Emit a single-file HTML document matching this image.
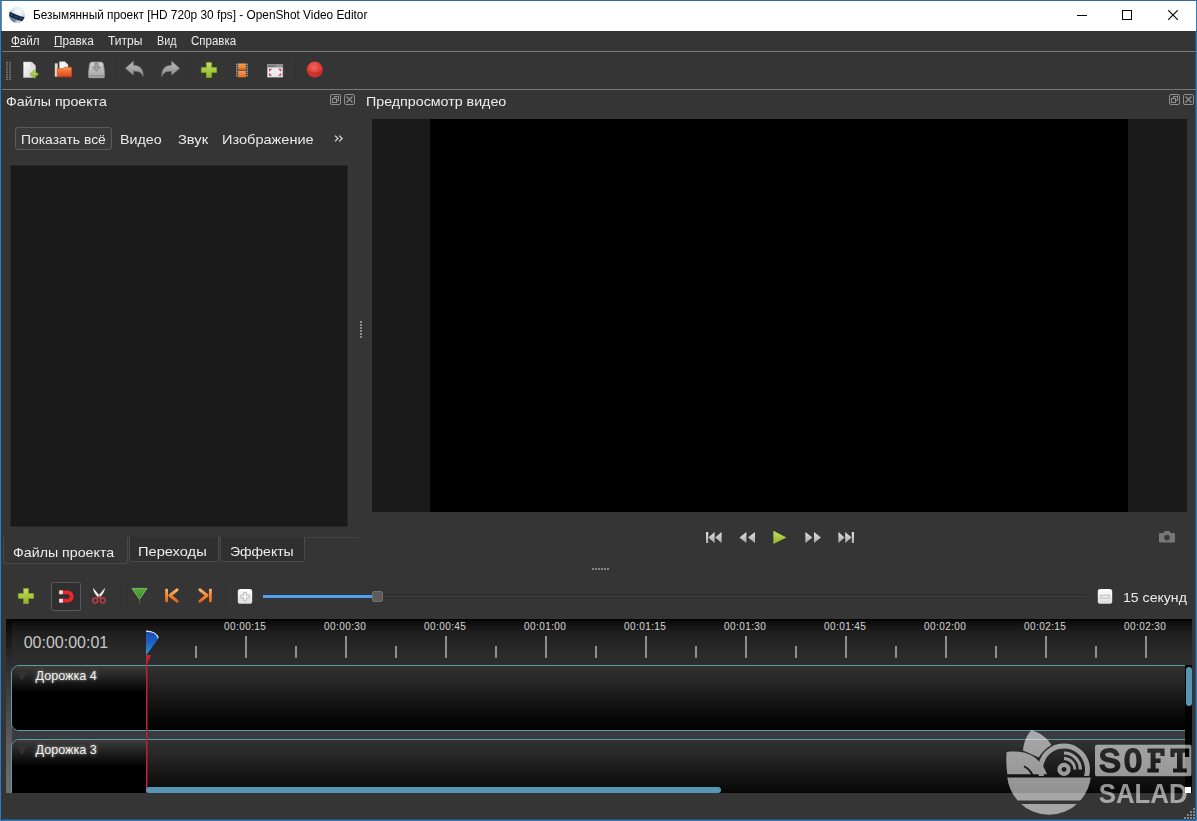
<!DOCTYPE html>
<html lang="ru">
<head>
<meta charset="utf-8">
<title>OpenShot Video Editor</title>
<style>
*{box-sizing:border-box;margin:0;padding:0}
html,body{width:1197px;height:821px;overflow:hidden}
body{font-family:"Liberation Sans",sans-serif;background:#353535;color:#e4e4e4;position:relative;font-size:13px}
.abs{position:absolute}
.t{position:absolute;white-space:nowrap;line-height:1}
#win{position:absolute;left:0;top:0;width:1197px;height:821px;border:1px solid #2b7cc0;border-top-color:#2a6f9e;border-left-color:#3f78a8;z-index:30;pointer-events:none}
#win:after{content:"";position:absolute;right:0;top:30px;width:1px;height:789px;background:rgba(43,124,192,.35)}
#win:before{content:"";position:absolute;left:0;bottom:0;width:1195px;height:1px;background:rgba(43,124,192,.4)}
#lb{position:absolute;left:1px;top:1px;width:1px;height:819px;background:rgba(22,62,100,.6);z-index:30}
#titlebar{position:absolute;left:1px;top:1px;width:1195px;height:30px;background:#fff}
#title{left:33px;top:9px;font-size:12px;color:#000}
#menubar{position:absolute;left:1px;top:31px;width:1195px;height:21px;background:#353535}
.menu{font-size:12.5px;color:#e6e6e6;top:35px}
.hline{position:absolute;left:2px;width:1194px;height:1px;background:#787878}
.docktitle{font-size:14px;color:#e8e8e8}
.flt{font-size:14.5px;color:#e2e2e2;top:133px}
#filelist{position:absolute;left:10px;top:165px;width:338px;height:362px;background:#1a1a1a;border:1px solid #282828}
.tab{position:absolute;top:537px;height:25px;border:1px solid #4a4a4a;border-top:none;border-radius:0 0 3px 3px;background:#2f2f2f;font-size:14.5px;color:#e6e6e6}
#preview{position:absolute;left:372px;top:119px;width:815px;height:393px;background:#1a1a1a}
#video{position:absolute;left:430px;top:119px;width:698px;height:393px;background:#000}
#timeline{position:absolute;left:6px;top:619px;width:1186px;height:174px;background:linear-gradient(#000 0px,#2c2c2c 41px,#333335 80px,#3b3a3e 115px,#3f3f41 174px);overflow:hidden}
#ruler{position:absolute;left:0;top:0;width:1186px;height:42px;background:linear-gradient(#000 0%,#0e0e0e 7%,#1e1e1e 32%,#262626 62%,#2e2e2e 100%)}
#lstrip{position:absolute;left:0;top:0;width:6px;height:174px;background:linear-gradient(#050505 0px,#2c2c2c 41px,#4a4a4a 95px,#5e5e5e 125px,#6e6e6e 174px)}
.rl{position:absolute;top:3.4px;font-size:10px;letter-spacing:.42px;color:#d8d8d8;width:62px;text-align:center;line-height:10px;margin-left:-.8px}
.tk{position:absolute;width:2px;background:#8f8f8f}
.track{position:absolute;left:5px;width:1181px;height:66px;border:1px solid #5c9da6;border-radius:8px 0 0 8px;background:linear-gradient(#323232 0%,#262626 25%,#151515 55%,#030303 92%,#000 100%);overflow:hidden}
.tlabel{position:absolute;left:0;top:0;width:134px;height:100%;background:linear-gradient(#3c3c3c 0%,#1c1c1c 22%,#000 42%)}
.tarrow{position:absolute;left:5px;top:6px}
.tname{position:absolute;left:23.5px;top:3px;font-size:12.6px;color:#f2f2f2;line-height:14px;text-shadow:0 0 3px rgba(255,255,255,.5),0 0 6px rgba(255,255,255,.25)}
</style>
</head>
<body>
<div id="win"></div><div id="lb"></div>
<div id="titlebar"></div>
<div id="menubar"></div>
<div class="hline" style="top:51px"></div>
<div class="hline" style="top:89px"></div>


<!-- main toolbar -->
<svg class="abs" style="left:6px;top:62px" width="6" height="18" viewBox="0 0 6 18">
  <g fill="#6f6f6f"><rect x="0" y="0" width="2" height="1.5"/><rect x="3" y="0" width="2" height="1.5"/>
  <rect x="0" y="2.4" width="2" height="1.5"/><rect x="3" y="2.4" width="2" height="1.5"/>
  <rect x="0" y="4.8" width="2" height="1.5"/><rect x="3" y="4.8" width="2" height="1.5"/>
  <rect x="0" y="7.2" width="2" height="1.5"/><rect x="3" y="7.2" width="2" height="1.5"/>
  <rect x="0" y="9.6" width="2" height="1.5"/><rect x="3" y="9.6" width="2" height="1.5"/>
  <rect x="0" y="12" width="2" height="1.5"/><rect x="3" y="12" width="2" height="1.5"/>
  <rect x="0" y="14.4" width="2" height="1.5"/><rect x="3" y="14.4" width="2" height="1.5"/>
  <rect x="0" y="16.5" width="2" height="1.5"/><rect x="3" y="16.5" width="2" height="1.5"/></g>
</svg>
<!-- new -->
<svg class="abs" style="left:22px;top:61px" width="18" height="18" viewBox="0 0 18 18">
  <defs><linearGradient id="gDoc" x1="0" y1="0" x2="1" y2="1"><stop offset="0" stop-color="#fdfdfd"/><stop offset="1" stop-color="#cfcfcf"/></linearGradient>
  <linearGradient id="gGrn" x1="0" y1="0" x2="0" y2="1"><stop offset="0" stop-color="#c8e06a"/><stop offset="1" stop-color="#8db52c"/></linearGradient></defs>
  <path d="M1.5 1 H9.5 L13.5 5 V16.5 H1.5 Z" fill="url(#gDoc)" stroke="#bdbdbd" stroke-width=".6"/>
  <path d="M9.5 1 V5 H13.5 Z" fill="#e9e9e9" stroke="#bdbdbd" stroke-width=".5"/>
  <path d="M11 9.6 h2.6 v2.3 h2.3 v2.6 h-2.3 v2.3 h-2.6 v-2.3 h-2.3 v-2.6 h2.3 Z" fill="url(#gGrn)" stroke="#7c9f25" stroke-width=".6"/>
</svg>
<!-- open -->
<svg class="abs" style="left:54px;top:61px" width="19" height="18" viewBox="0 0 19 18">
  <defs><linearGradient id="gFold" x1="0" y1="0" x2="0" y2="1"><stop offset="0" stop-color="#f49a5a"/><stop offset=".5" stop-color="#ee6a2c"/><stop offset="1" stop-color="#e0451c"/></linearGradient></defs>
  <path d="M1 2.5 H3.5 V15.5 H1 Z" fill="#e8e0d8" stroke="#c9b9a9" stroke-width=".5"/>
  <path d="M5.5 .8 H11 L14 3.8 V9 H5.5 Z" fill="#f6f6f6" stroke="#cfcfcf" stroke-width=".5"/>
  <path d="M11 .8 V3.8 H14 Z" fill="#dcdcdc"/>
  <path d="M3.2 7.6 H9 L10.3 6.2 H17.6 V15.8 H3.2 Z" fill="url(#gFold)" stroke="#d0451e" stroke-width=".6"/>
</svg>
<!-- save -->
<svg class="abs" style="left:87px;top:61px" width="19" height="18" viewBox="0 0 19 18">
  <defs><linearGradient id="gSav" x1="0" y1="0" x2="0" y2="1"><stop offset="0" stop-color="#cfcfcf"/><stop offset="1" stop-color="#a6a6a6"/></linearGradient></defs>
  <path d="M5 1 H14 Q16 1 16.4 3 L17.6 11.4 V15.4 Q17.6 16.9 16 16.9 H3 Q1.4 16.9 1.4 15.4 V11.4 L2.6 3 Q3 1 5 1Z" fill="url(#gSav)" stroke="#909090" stroke-width=".6"/>
  <path d="M8 2 H11 V6.2 H13.4 L9.5 10.4 L5.6 6.2 H8 Z" fill="#a2a2a2" stroke="#7e7e7e" stroke-width=".8" stroke-linejoin="round"/>
  <rect x="2.6" y="14.2" width="13.8" height="1.1" fill="#8a8a8a"/>
</svg>
<div class="abs" style="left:116px;top:58px;width:1px;height:25px;background:#303030"></div>
<!-- undo -->
<svg class="abs" style="left:124px;top:60px" width="21" height="18" viewBox="0 0 21 18">
  <defs><linearGradient id="gUn" x1="0" y1="0" x2="0" y2="1"><stop offset="0" stop-color="#bdbdbd"/><stop offset="1" stop-color="#8a8a8a"/></linearGradient></defs>
  <path d="M9.4 1.2 V5.2 C15.4 5.2 19.6 8.6 19.2 16.4 C17.6 12.6 14.6 10.8 9.4 11.2 V15.2 L1.4 8.2 Z" fill="url(#gUn)" stroke="#7e7e7e" stroke-width=".5"/>
</svg>
<!-- redo -->
<svg class="abs" style="left:160px;top:60px" width="21" height="18" viewBox="0 0 21 18">
  <path transform="translate(21,0) scale(-1,1)" d="M9.4 1.2 V5.2 C15.4 5.2 19.6 8.6 19.2 16.4 C17.6 12.6 14.6 10.8 9.4 11.2 V15.2 L1.4 8.2 Z" fill="url(#gUn)" stroke="#7e7e7e" stroke-width=".5"/>
</svg>
<div class="abs" style="left:189px;top:58px;width:1px;height:25px;background:#303030"></div>
<!-- plus -->
<svg class="abs" style="left:200px;top:61px" width="18" height="18" viewBox="0 0 18 18">
  <defs><linearGradient id="gPl" x1="0" y1="0" x2="0" y2="1"><stop offset="0" stop-color="#c6df6c"/><stop offset=".5" stop-color="#a9cc3f"/><stop offset="1" stop-color="#8fb52c"/></linearGradient></defs>
  <path d="M6.4 1.4 H11.6 V6.4 H16.6 V11.6 H11.6 V16.6 H6.4 V11.6 H1.4 V6.4 H6.4 Z" fill="url(#gPl)" stroke="#86a82a" stroke-width=".7" stroke-linejoin="round"/>
</svg>
<!-- film -->
<svg class="abs" style="left:235px;top:61.5px" width="14" height="17" viewBox="0 0 16 18" preserveAspectRatio="none">
  <defs><linearGradient id="gFi" x1="0" y1="0" x2="0" y2="1"><stop offset="0" stop-color="#f5a25a"/><stop offset="1" stop-color="#ec6b1e"/></linearGradient></defs>
  <rect x="1.3" y="1.2" width="13.4" height="15.4" fill="#3a3a3a"/>
  <rect x="3.6" y="1.6" width="8.8" height="6.6" fill="url(#gFi)"/>
  <rect x="3.6" y="9.2" width="8.8" height="7" fill="url(#gFi)"/>
  <g fill="#f2f2f2"><rect x="1.6" y="1.8" width="1.1" height="1.3"/><rect x="1.6" y="4.2" width="1.1" height="1.3"/><rect x="1.6" y="6.6" width="1.1" height="1.3"/><rect x="1.6" y="9" width="1.1" height="1.3"/><rect x="1.6" y="11.4" width="1.1" height="1.3"/><rect x="1.6" y="13.8" width="1.1" height="1.3"/>
  <rect x="13.3" y="1.8" width="1.1" height="1.3"/><rect x="13.3" y="4.2" width="1.1" height="1.3"/><rect x="13.3" y="6.6" width="1.1" height="1.3"/><rect x="13.3" y="9" width="1.1" height="1.3"/><rect x="13.3" y="11.4" width="1.1" height="1.3"/><rect x="13.3" y="13.8" width="1.1" height="1.3"/></g>
</svg>
<!-- fullscreen -->
<svg class="abs" style="left:266px;top:62.6px" width="18" height="15.6" viewBox="0 0 18 17" preserveAspectRatio="none">
  <rect x="1.4" y="1.6" width="15.4" height="13.8" fill="#ececec" stroke="#b5b5b5" stroke-width=".6"/>
  <rect x="1.4" y="1.6" width="15.4" height="3.2" fill="#7a7a7a"/>
  <g fill="#cfcfcf"><rect x="10.2" y="2.7" width="1.3" height="1"/><rect x="12.2" y="2.7" width="1.3" height="1"/><rect x="14.2" y="2.7" width="1.3" height="1"/></g>
  <g fill="#d8374a"><path d="M3 6.4 h3.2 l-3.2 3.2Z"/><path d="M15.2 6.4 h-3.2 l3.2 3.2Z"/><path d="M3 14 h3.2 l-3.2 -3.2Z"/><path d="M15.2 14 h-3.2 l3.2 -3.2Z"/></g>
</svg>
<div class="abs" style="left:295px;top:58px;width:1px;height:25px;background:#303030"></div>
<!-- record -->
<svg class="abs" style="left:306px;top:61px" width="18" height="18" viewBox="0 0 18 18">
  <defs><radialGradient id="gRec" cx=".45" cy=".35" r=".7"><stop offset="0" stop-color="#f0655c"/><stop offset=".6" stop-color="#e03a34"/><stop offset="1" stop-color="#c22826"/></radialGradient></defs>
  <circle cx="8.8" cy="8.6" r="8" fill="url(#gRec)"/><path d="M1.2 9.4 Q8.8 12.4 16.4 9.4 Q16 11.6 14.8 13 Q8.8 15 2.8 13 Q1.6 11.6 1.2 9.4Z" fill="#b82222" opacity=".35"/>
</svg>


<div class="abs" style="left:15px;top:127px;width:97px;height:23px;border:1px solid #5a5a5a;border-radius:3px;background:#3a3a3a"></div>
<svg class="abs" style="left:334px;top:135px" width="10" height="7" viewBox="0 0 10 7"><path d="M1 .6 L4 3.5 L1 6.4 M5.2 .6 L8.2 3.5 L5.2 6.4" fill="none" stroke="#dcdcdc" stroke-width="1.2"/></svg>

<div id="filelist"></div>

<div class="abs" style="left:3px;top:537px;width:355px;height:1px;background:#444"></div>
<div class="tab" style="left:3px;width:125px;background:#353535;border-top:1px solid #353535;top:537px;height:27px"></div>
<div class="tab" style="left:129px;width:90px"></div>
<div class="tab" style="left:220px;width:85px"></div>

<div id="preview"></div>
<div id="video"></div>


<!-- title icon -->
<svg class="abs" style="left:8px;top:6px" width="18" height="18" viewBox="0 0 18 18">
  <defs><radialGradient id="gSph" cx=".6" cy=".28" r=".8"><stop offset="0" stop-color="#ffffff"/><stop offset=".45" stop-color="#d4e4ee"/><stop offset="1" stop-color="#7f97ac"/></radialGradient>
  <clipPath id="cSph"><circle cx="9" cy="9" r="7.9"/></clipPath></defs>
  <circle cx="9" cy="9" r="7.9" fill="url(#gSph)"/>
  <g clip-path="url(#cSph)">
    <path d="M0 4.6 C5 7.4 11 10 18 11.4 L18 15.8 C11 14.8 5 12.6 0 9.6 Z" fill="#15233c"/>
    <path d="M0 9.6 C5 12.6 11 14.8 18 15.8 L18 18 L0 18Z" fill="#5b7390" opacity=".8"/>
    <path d="M2 7.2 L5 8.6 L4.6 10.2 L1.6 8.8Z M6.4 9.4 L9.6 10.6 L9.2 12.2 L6 11Z M11 11.2 L14.4 12 L14 13.6 L10.6 12.8Z" fill="#2d4a78" opacity=".9"/>
    <ellipse cx="10" cy="16" rx="3" ry="1.6" fill="#e6eef4" opacity=".8"/>
  </g>
</svg>
<!-- window controls -->
<div class="abs" style="left:1077px;top:15px;width:10px;height:1px;background:#000"></div>
<div class="abs" style="left:1122px;top:10px;width:10px;height:10px;border:1px solid #000"></div>
<svg class="abs" style="left:1168px;top:10px" width="10" height="10" viewBox="0 0 10 10"><path d="M0 0 L10 10 M10 0 L0 10" stroke="#000" stroke-width="1.1"/></svg>

<!-- dock buttons -->
<svg class="abs dockbtn" style="left:330px;top:94px" width="26" height="11" viewBox="0 0 26 11">
  <g fill="none" stroke="#8e8e8e" stroke-width="1"><rect x=".5" y=".5" width="10" height="10" rx="1.5"/><rect x="4.5" y="2.5" width="4" height="4"/><rect x="2.5" y="4.5" width="4" height="4" fill="#353535"/>
  <rect x="14.5" y=".5" width="10" height="10" rx="1.5"/><path d="M16.5 2.5 L22.5 8.5 M22.5 2.5 L16.5 8.5" stroke-width="1.3"/></g>
</svg>
<svg class="abs dockbtn" style="left:1169px;top:94px" width="26" height="11" viewBox="0 0 26 11">
  <g fill="none" stroke="#8e8e8e" stroke-width="1"><rect x=".5" y=".5" width="10" height="10" rx="1.5"/><rect x="4.5" y="2.5" width="4" height="4"/><rect x="2.5" y="4.5" width="4" height="4" fill="#353535"/>
  <rect x="14.5" y=".5" width="10" height="10" rx="1.5"/><path d="M16.5 2.5 L22.5 8.5 M22.5 2.5 L16.5 8.5" stroke-width="1.3"/></g>
</svg>

<!-- splitter handles -->
<svg class="abs" style="left:360px;top:321px" width="2" height="17" viewBox="0 0 2 17"><g fill="#8c8c8c"><rect x="0" y="0" width="2" height="2"/><rect x="0" y="3" width="2" height="2"/><rect x="0" y="6" width="2" height="2"/><rect x="0" y="9" width="2" height="2"/><rect x="0" y="12" width="2" height="2"/><rect x="0" y="15" width="2" height="2"/></g></svg>
<svg class="abs" style="left:592px;top:568px" width="17" height="2" viewBox="0 0 17 2"><g fill="#848484"><rect y="0" x="0" width="2" height="2"/><rect y="0" x="3" width="2" height="2"/><rect y="0" x="6" width="2" height="2"/><rect y="0" x="9" width="2" height="2"/><rect y="0" x="12" width="2" height="2"/><rect y="0" x="15" width="2" height="2"/></g></svg>

<!-- playback controls -->
<svg class="abs" style="left:705px;top:530px" width="150" height="15" viewBox="0 0 150 15">
  <defs><linearGradient id="gPb" x1="0" y1="0" x2="0" y2="1"><stop offset="0" stop-color="#e2e2e2"/><stop offset="1" stop-color="#a8a8a8"/></linearGradient>
  <linearGradient id="gPlay" x1="0" y1="0" x2="0" y2="1"><stop offset="0" stop-color="#c3e05e"/><stop offset="1" stop-color="#8fb62c"/></linearGradient></defs>
  <g fill="url(#gPb)">
    <rect x="1" y="2" width="2.2" height="11"/><path d="M9.6 2 V13 L3.4 7.5Z"/><path d="M16.6 2 V13 L10.2 7.5Z"/>
    <path d="M41.4 2 V13 L34.4 7.5Z"/><path d="M50 2 V13 L43 7.5Z"/>
    <path d="M100.4 2 V13 L107.4 7.5Z"/><path d="M109 2 V13 L116 7.5Z"/>
    <path d="M133.4 2 V13 L139.6 7.5Z"/><path d="M140.2 2 V13 L146.6 7.5Z"/><rect x="146.8" y="2" width="2.2" height="11"/>
  </g>
  <path d="M68.4 .8 V14 L81.4 7.4Z" fill="url(#gPlay)"/>
</svg>
<!-- camera -->
<svg class="abs" style="left:1158px;top:529px" width="18" height="15" viewBox="0 0 18 15">
  <path d="M2 4 H5.4 L6.6 2 H11.4 L12.6 4 H16 Q17 4 17 5 V12.6 Q17 13.6 16 13.6 H2 Q1 13.6 1 12.6 V5 Q1 4 2 4Z" fill="#787878"/>
  <circle cx="9" cy="8.6" r="2.8" fill="#3a3a3a"/>
</svg>


<!-- timeline toolbar -->
<svg class="abs" style="left:17px;top:587px" width="18" height="18" viewBox="0 0 18 18">
  <path d="M6.6 1.4 H11.4 V6.6 H16.6 V11.4 H11.4 V16.6 H6.6 V11.4 H1.4 V6.6 H6.6 Z" fill="url(#gPl)" stroke="#86a82a" stroke-width=".7" stroke-linejoin="round"/>
</svg>
<div class="abs" style="left:51px;top:582px;width:30px;height:29px;border:1px solid #585858;border-radius:2px;background:#2f2f2f"></div>
<svg class="abs" style="left:58px;top:589px" width="18" height="15" viewBox="0 0 18 15">
  <path d="M1.2 1.4 H9.6 A6.1 6.1 0 0 1 9.6 13.6 H1.2 V9.8 H9.4 A2.3 2.3 0 0 0 9.4 5.2 H1.2 Z" fill="#e8262c"/>
  <rect x="1.2" y="1.4" width="3.6" height="3.8" fill="#f5e4e4"/><rect x="1.2" y="9.8" width="3.6" height="3.8" fill="#f5e4e4"/>
</svg>
<svg class="abs" style="left:91px;top:587px" width="16" height="18" viewBox="0 0 16 18">
  <path d="M2 .8 C2.2 5 5 8.6 8 11 L9.4 9.6 C7.2 6.8 4.4 3.6 2 .8Z" fill="#f0f0f0"/>
  <path d="M14 .8 C13.8 5 11 8.6 8 11 L6.6 9.6 C8.8 6.8 11.6 3.6 14 .8Z" fill="#e6e6e6"/>
  <circle cx="4.2" cy="13.6" r="2.5" fill="none" stroke="#c03a44" stroke-width="1.5"/>
  <circle cx="11.8" cy="13.6" r="2.5" fill="none" stroke="#c03a44" stroke-width="1.5"/>
  <path d="M6 11.6 L8 9.4 L10 11.6" fill="none" stroke="#c03a44" stroke-width="1.4"/>
</svg>
<div class="abs" style="left:120px;top:584px;width:1px;height:25px;background:#313131"></div>
<svg class="abs" style="left:131px;top:587px" width="17" height="18" viewBox="0 0 17 18">
  <defs><linearGradient id="gTri" x1="0" y1="0" x2="0" y2="1"><stop offset="0" stop-color="#58a83c"/><stop offset="1" stop-color="#3c8a26"/></linearGradient></defs>
  <path d="M1 1.4 H16 L8.5 12.4Z" fill="url(#gTri)" stroke="#86c66a" stroke-width=".8"/>
  <rect x="8.1" y="12" width=".8" height="4.6" fill="#3f7f2d"/>
</svg>
<svg class="abs" style="left:164px;top:588px" width="15" height="15" viewBox="0 0 15 15">
  <defs><linearGradient id="gOr" x1="0" y1="0" x2="0" y2="1"><stop offset="0" stop-color="#f9b56a"/><stop offset=".5" stop-color="#f28a32"/><stop offset="1" stop-color="#e8641c"/></linearGradient></defs>
  <rect x="1.2" y=".8" width="2.8" height="13.4" rx=".8" fill="url(#gOr)"/>
  <path d="M13 1.8 L6 7.5 L13 13.2" fill="none" stroke="url(#gOr)" stroke-width="3" stroke-linecap="round" stroke-linejoin="round"/>
</svg>
<svg class="abs" style="left:198px;top:588px" width="15" height="15" viewBox="0 0 15 15">
  <rect x="11" y=".8" width="2.8" height="13.4" rx=".8" fill="url(#gOr)"/>
  <path d="M2 1.8 L9 7.5 L2 13.2" fill="none" stroke="url(#gOr)" stroke-width="3" stroke-linecap="round" stroke-linejoin="round"/>
</svg>
<div class="abs" style="left:225px;top:584px;width:1px;height:25px;background:#313131"></div>
<svg class="abs" style="left:237px;top:588px" width="16" height="17" viewBox="0 0 16 17">
  <defs><linearGradient id="gZm" x1="0" y1="0" x2="0" y2="1"><stop offset="0" stop-color="#ffffff"/><stop offset="1" stop-color="#dcdcdc"/></linearGradient></defs>
  <rect x=".8" y="1" width="14.4" height="14.8" rx="2.6" fill="url(#gZm)"/>
  <path d="M6.6 4.4 H9.4 V7.2 H12.2 V10 H9.4 V12.8 H6.6 V10 H3.8 V7.2 H6.6Z" fill="#f4f4f4" stroke="#b4b4b4" stroke-width=".9"/>
</svg>
<!-- slider -->
<div class="abs" style="left:263px;top:594px;width:824px;height:5px;background:#373737;border-top:1px solid #2b2b2b;border-bottom:1px solid #2b2b2b"></div>
<div class="abs" style="left:263px;top:594px;width:109px;height:5px;background:#5a9ee2;border-top:1px solid #1f3450;border-bottom:1px solid #1f3450"></div>
<div class="abs" style="left:372px;top:591px;width:11px;height:11px;background:#5c5c5c;border:1px solid #777062;border-radius:2px"></div>
<svg class="abs" style="left:1097px;top:588px" width="16" height="17" viewBox="0 0 16 17">
  <rect x=".8" y="1" width="14.4" height="14.8" rx="2.6" fill="url(#gZm)"/>
  <rect x="3.8" y="7.2" width="8.4" height="2.8" fill="#f4f4f4" stroke="#b4b4b4" stroke-width=".9"/>
</svg>


<!--TEXTS-->
<div class="t" id="title" style="left:32.96px;top:9.49px;font-size:12.3px;color:#000;transform:scaleX(0.9623);transform-origin:0 0">Безымянный проект [HD 720p 30 fps] - OpenShot Video Editor</div>
<div class="t" id="m1" style="left:11.30px;top:34.74px;font-size:12px;color:#ececec;transform:scaleX(0.9703);transform-origin:0 0"><u>Ф</u>айл</div>
<div class="t" id="m2" style="left:54.02px;top:34.74px;font-size:12px;color:#ececec;transform:scaleX(0.9815);transform-origin:0 0"><u>П</u>равка</div>
<div class="t" id="m3" style="left:108.47px;top:34.74px;font-size:12px;color:#ececec;transform:scaleX(1.0061);transform-origin:0 0">Титры</div>
<div class="t" id="m4" style="left:157.48px;top:34.74px;font-size:12px;color:#ececec;transform:scaleX(0.8967);transform-origin:0 0">Вид</div>
<div class="t" id="m5" style="left:191.39px;top:34.74px;font-size:12px;color:#ececec;transform:scaleX(0.9572);transform-origin:0 0">Справка</div>
<div class="t" id="d1" style="left:6.43px;top:94.57px;font-size:13.5px;color:#eeeeee;transform:scaleX(1.0492);transform-origin:0 0">Файлы проекта</div>
<div class="t" id="d2" style="left:366.40px;top:94.57px;font-size:13.5px;color:#eeeeee;transform:scaleX(1.0553);transform-origin:0 0">Предпросмотр видео</div>
<div class="t" id="f1" style="left:20.69px;top:133.37px;font-size:13.5px;color:#ebebeb;transform:scaleX(1.0294);transform-origin:0 0">Показать всё</div>
<div class="t" id="f2" style="left:120.04px;top:133.37px;font-size:13.5px;color:#ebebeb;transform:scaleX(1.0572);transform-origin:0 0">Видео</div>
<div class="t" id="f3" style="left:177.57px;top:133.37px;font-size:13.5px;color:#ebebeb;transform:scaleX(1.0877);transform-origin:0 0">Звук</div>
<div class="t" id="f4" style="left:222.18px;top:133.37px;font-size:13.5px;color:#ebebeb;transform:scaleX(1.0778);transform-origin:0 0">Изображение</div>
<div class="t" id="t1" style="left:13.24px;top:546.17px;font-size:13.5px;color:#eeeeee;transform:scaleX(1.0526);transform-origin:0 0">Файлы проекта</div>
<div class="t" id="t2" style="left:138.03px;top:545.07px;font-size:13.5px;color:#eeeeee;transform:scaleX(1.0842);transform-origin:0 0">Переходы</div>
<div class="t" id="t3" style="left:229.87px;top:545.07px;font-size:13.5px;color:#eeeeee;transform:scaleX(1.0376);transform-origin:0 0">Эффекты</div>
<div class="t" id="z1" style="left:1122.55px;top:591.17px;font-size:13.5px;color:#ececec;transform:scaleX(1.0444);transform-origin:0 0">15 секунд</div>
<!--/TEXTS-->
<div id="timeline">
  <div id="ruler"></div>
  <div id="lstrip"></div>
<div class="rl" style="left:209px">00:00:15</div><div class="tk" style="left:239px;top:17px;height:22px"></div>
<div class="rl" style="left:309px">00:00:30</div><div class="tk" style="left:339px;top:17px;height:22px"></div>
<div class="rl" style="left:409px">00:00:45</div><div class="tk" style="left:439px;top:17px;height:22px"></div>
<div class="rl" style="left:509px">00:01:00</div><div class="tk" style="left:539px;top:17px;height:22px"></div>
<div class="rl" style="left:609px">00:01:15</div><div class="tk" style="left:639px;top:17px;height:22px"></div>
<div class="rl" style="left:709px">00:01:30</div><div class="tk" style="left:739px;top:17px;height:22px"></div>
<div class="rl" style="left:809px">00:01:45</div><div class="tk" style="left:839px;top:17px;height:22px"></div>
<div class="rl" style="left:909px">00:02:00</div><div class="tk" style="left:939px;top:17px;height:22px"></div>
<div class="rl" style="left:1009px">00:02:15</div><div class="tk" style="left:1039px;top:17px;height:22px"></div>
<div class="rl" style="left:1109px">00:02:30</div><div class="tk" style="left:1139px;top:17px;height:22px"></div>
<div class="tk" style="left:189px;top:27px;height:12px"></div>
<div class="tk" style="left:289px;top:27px;height:12px"></div>
<div class="tk" style="left:389px;top:27px;height:12px"></div>
<div class="tk" style="left:489px;top:27px;height:12px"></div>
<div class="tk" style="left:589px;top:27px;height:12px"></div>
<div class="tk" style="left:689px;top:27px;height:12px"></div>
<div class="tk" style="left:789px;top:27px;height:12px"></div>
<div class="tk" style="left:889px;top:27px;height:12px"></div>
<div class="tk" style="left:989px;top:27px;height:12px"></div>
<div class="tk" style="left:1089px;top:27px;height:12px"></div>
  <div class="t" id="tc" style="left:17.7px;top:16.3px;font-size:16px;color:#c8c8c8">00:00:00:01</div>
  <div class="track" style="top:46px"><div class="tlabel"></div><svg class="tarrow" width="10" height="10" viewBox="0 0 10 10"><path d="M0 0 H10 L5 9Z" fill="#343434"/></svg><div class="tname">Дорожка 4</div></div>
  <div class="track" style="top:120px"><div class="tlabel"></div><svg class="tarrow" width="10" height="10" viewBox="0 0 10 10"><path d="M0 0 H10 L5 9Z" fill="#343434"/></svg><div class="tname">Дорожка 3</div></div>
  <svg class="abs" style="left:139px;top:11px;z-index:7" width="16" height="36" viewBox="0 0 16 36">
    <defs><linearGradient id="gPh" x1="0" y1="0" x2="0" y2="1"><stop offset="0" stop-color="#1b49b6"/><stop offset=".55" stop-color="#1f66c4"/><stop offset="1" stop-color="#2fa0c4"/></linearGradient></defs>
    <path d="M1 .8 C7.4 .8 12.8 3.6 13.6 8.4 L1.6 25 L1 25 Z" fill="url(#gPh)"/>
    <path d="M13.6 8.4 L1.6 25 L4.4 25 L13.6 9.6Z" fill="#15294a" opacity=".8"/>
    <path d="M1 1.2 C7.2 1.2 12.2 3.8 13.2 8" fill="none" stroke="#dfe8f4" stroke-width="1.3"/>
    <path d="M1 25 L6 25 L2.4 33.6 L1 33.6Z" fill="#c4212f"/>
  </svg>
  <div class="abs" style="left:140px;top:40px;width:2px;height:140px;background:linear-gradient(90deg,#bf2038 0,#bf2038 50%,rgba(176,32,56,.55) 50%);z-index:5"></div>
  <div class="abs" style="left:140px;top:168px;width:575px;height:6px;background:#5795b4;border-radius:3px;z-index:6"></div>
  <div class="abs" style="left:1179px;top:46px;width:7px;height:128px;background:#000;z-index:6"></div>
  <div class="abs" style="left:1179.5px;top:48px;width:6px;height:39px;background:#5795b4;border-radius:3px;z-index:7"></div>
</div>

<!-- watermark -->
<svg class="abs" id="wm" style="left:0;top:0;z-index:20" width="1197" height="821" viewBox="0 0 1197 821">
  <defs>
    <clipPath id="cBowl"><rect x="1000" y="777.6" width="100" height="23"/><rect x="1000" y="804" width="100" height="12"/></clipPath>
    <clipPath id="cTop"><rect x="1000" y="725" width="100" height="51"/></clipPath>
    <mask id="mSoft"><rect x="1095" y="744.4" width="96.7" height="32" rx="2.5" fill="#fff"/>
      <g fill="#000" stroke="none">
        <path d="M1119.6 755.6 C1118.6 750.4 1114.6 748 1109.8 748 C1104 748 1100 750.8 1100 755.2 C1100 759.8 1103.6 761.4 1109 762.6 C1113.4 763.6 1115 764.4 1115 766 C1115 767.6 1113.2 768.4 1110.4 768.4 C1107 768.4 1105 767 1104.4 764.2 L1099.4 764.8 C1100.2 770.2 1104.2 772.8 1110.2 772.8 C1116.6 772.8 1120.4 770 1120.4 765.4 C1120.4 760.6 1116.6 759 1110.8 757.8 C1106.8 757 1105.2 756.4 1105.2 754.8 C1105.2 753.2 1106.8 752.4 1109.6 752.4 C1112.4 752.4 1114 753.6 1114.6 756.2Z"/>
        <path fill-rule="evenodd" d="M1133 748 C1138.4 748 1141.6 752.4 1141.6 760.4 C1141.6 768.4 1138.4 772.8 1133 772.8 C1127.6 772.8 1124.4 768.4 1124.4 760.4 C1124.4 752.4 1127.6 748 1133 748Z M1133 752.6 C1130.6 752.6 1129.6 755.2 1129.6 760.4 C1129.6 765.6 1130.6 768.2 1133 768.2 C1135.4 768.2 1136.4 765.6 1136.4 760.4 C1136.4 755.2 1135.4 752.6 1133 752.6Z"/>
        <path d="M1147.4 748.4 H1164.6 V756 H1160.4 V752.8 H1155.6 V758.6 H1160.6 V763 H1155.6 V768.4 H1158.8 V772.6 H1147.4 V768.4 H1150.6 V752.8 H1147.4Z"/>
        <path d="M1170.4 748.4 H1189.2 V757 H1185 V752.8 H1182.6 V768.4 H1186.6 V772.6 H1173 V768.4 H1177 V752.8 H1174.6 V757 H1170.4Z"/>
      </g></mask>
  </defs>
  <g fill="#fff" opacity=".56">
    <circle cx="1049" cy="772.7" r="42" clip-path="url(#cBowl)"/>
    <g clip-path="url(#cTop)">
      <path d="M1064 743.4 a26 26 0 1 1 -0.01 0Z M1064 748.4 a21 21 0 1 0 0.01 0Z" fill-rule="evenodd"/>
      <path d="M1064 751.4 a18 18 0 0 1 18 18 h-3.2 a14.8 14.8 0 0 0 -14.8 -14.8Z"/>
      <path d="M1064 757 a12.4 12.4 0 0 1 12.4 12.4 h-3 a9.4 9.4 0 0 0 -9.4 -9.4Z"/>
      <path d="M1064 762.8 a6.6 6.6 0 1 1 -0.01 0Z M1064 767 a2.4 2.4 0 1 0 0.01 0Z" fill-rule="evenodd"/>
      <path d="M1031.3 730.2 C1040 732.5 1047.5 738 1051.4 745 C1046 748 1041.8 752.5 1038.8 757.4 L1023 750.6 C1023.5 743 1026.5 735.5 1031.3 730.2Z"/>
      <path d="M1006.6 752 C1020 750.5 1030 753 1036.5 759 C1041.5 763.5 1045 768.5 1047 774.3 L1033.2 774.3 C1031.5 770.5 1028.5 767.5 1024.5 765.6 L1023.5 767 C1027 768.8 1029.6 771.4 1031 774.3 L1007.3 774.3 C1006.3 767 1006 759.5 1006.6 752Z"/>
    </g>
    <rect x="1095" y="744.4" width="96.7" height="32" mask="url(#mSoft)"/>
    <text id="wmSalad" x="1143.2" y="803.1" text-anchor="middle" font-family="Liberation Sans" font-weight="bold" font-size="27.4" textLength="89" lengthAdjust="spacingAndGlyphs">SALAD</text>
  </g>
</svg>
<!-- scroll corner + size grip -->
<div class="abs" style="left:1185px;top:787px;width:6px;height:6px;background:#fff;z-index:21"></div>
<svg class="abs" style="left:1184px;top:808px" width="11" height="11" viewBox="0 0 11 11"><g fill="#858585"><rect x="9" y="0" width="2" height="2"/><rect x="6" y="3" width="2" height="2"/><rect x="9" y="3" width="2" height="2"/><rect x="3" y="6" width="2" height="2"/><rect x="6" y="6" width="2" height="2"/><rect x="9" y="6" width="2" height="2"/><rect x="0" y="9" width="2" height="2"/><rect x="3" y="9" width="2" height="2"/><rect x="6" y="9" width="2" height="2"/><rect x="9" y="9" width="2" height="2"/></g></svg>
</body>
</html>
